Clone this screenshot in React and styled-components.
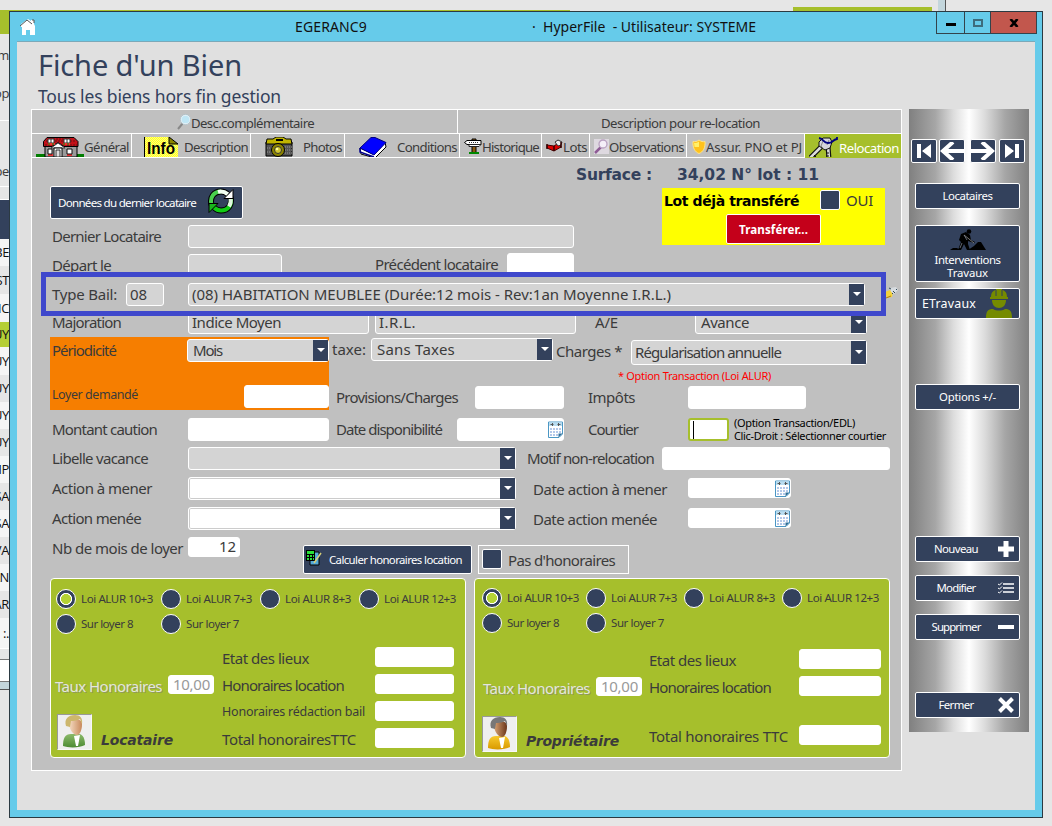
import React, { useLayoutEffect, useRef, useState } from "react";
import styled, { createGlobalStyle, css } from "styled-components";

const navy = "#33415c";
const green = "#a6bf2c";
const ink = "#3b3b3b";

const GlobalStyle = createGlobalStyle`
  * { box-sizing: border-box; }
  html, body { margin: 0; padding: 0; overflow: hidden; }
  body {
    width: 1052px;
    height: 826px;
    background: #e6e6e6;
    font-family: "Noto Sans", "DejaVu Sans", sans-serif;
    font-size: 15px;
    color: ${ink};
  }
`;

/* ---------- text ---------- */

const TextSpan = styled.span`
  display: inline-block;
  white-space: pre;
  flex: none;
`;

/* Spreads its letters so that the text covers exactly w pixels. */
function Fit({ w, children }) {
  const ref = useRef(null);
  const [spacing, setSpacing] = useState(0);
  useLayoutEffect(() => {
    const natural = ref.current.getBoundingClientRect().width;
    setSpacing((w - natural) / String(children).length);
  }, [w, children]);
  return (
    <TextSpan ref={ref} style={{ letterSpacing: spacing }}>
      {children}
    </TextSpan>
  );
}

const place = css`
  flex: none;
  margin-left: ${(p) => p.$l || 0}px;
  margin-top: ${(p) => p.$t || 0}px;
`;

const LabelBox = styled.div`
  ${place}
  width: ${(p) => (p.$w ? p.$w + "px" : "auto")};
  height: 20px;
  line-height: ${(p) => (p.$bold || p.$size ? 20 : 18)}px;
  font-size: ${(p) => p.$size || 15}px;
  font-family: ${(p) => (p.$bold ? '"DejaVu Sans", sans-serif' : "inherit")};
  font-weight: ${(p) => (p.$bold ? 700 : 400)};
  font-style: ${(p) => (p.$italic ? "italic" : "normal")};
  color: ${(p) => p.$color || "inherit"};
  text-shadow: ${(p) => p.$shadow || "none"};
  white-space: nowrap;
`;

function Label({ fit, children, ...rest }) {
  return (
    <LabelBox {...rest}>
      <Fit w={fit}>{children}</Fit>
    </LabelBox>
  );
}

/* ---------- desktop behind the window ---------- */

const Desktop = styled.div`
  position: relative;
  width: 1052px;
  height: 826px;
  overflow: hidden;
  background: #e6e6e6;
`;

const BackList = styled.div`
  width: 9px;
  overflow: hidden;
  font-family: "Open Sans", "Noto Sans", sans-serif;
  font-size: 13px;
  letter-spacing: -0.4px;
  color: #000;
`;

const BackStrip = styled.div`
  height: ${(p) => p.$h}px;
  line-height: ${(p) => p.$h}px;
  background: ${(p) => p.$bg || "transparent"};
  border-bottom: ${(p) => (p.$line ? `1px solid ${p.$line}` : "none")};
  color: ${(p) => p.$color || "#111"};
  white-space: nowrap;
  display: flex;
  justify-content: flex-end;
`;

const TopAccents = styled.div`
  position: absolute;
  left: 0;
  top: 0;
  width: 1052px;
  height: 11px;
  display: flex;
  align-items: flex-end;
`;

const Accent = styled.div`
  width: ${(p) => p.$w}px;
  height: ${(p) => p.$h}px;
  margin-left: ${(p) => p.$l || 0}px;
  background: ${(p) => p.$bg};
  border-right: ${(p) => (p.$edge ? "1px solid #555" : "none")};
`;

/* ---------- window frame ---------- */

const Window = styled.div`
  position: absolute;
  left: 9px;
  top: 11px;
  width: 1034px;
  height: 807px;
  border: 1px solid #2b3a42;
  background: #66cbea;
  padding: 0 7px 7px;
  display: flex;
  flex-direction: column;
`;

const TitleBar = styled.div`
  flex: none;
  height: 30px;
  display: flex;
  align-items: flex-start;
  color: #111;
  border-bottom: 1px solid #7ba9b9;
`;

const HomeIcon = styled.svg`
  flex: none;
  margin: 7px 0 0 3px;
  width: 16px;
  height: 16px;
`;

const TitleText = styled.div`
  flex: none;
  width: ${(p) => p.$w}px;
  margin-left: ${(p) => p.$l}px;
  font-size: 14px;
  line-height: 20px;
  margin-top: 5px;
  white-space: pre;
`;

const WindowButtons = styled.div`
  flex: none;
  display: flex;
  height: 22px;
  margin-left: 180px;
  border: 1px solid #33434b;
  border-top: 0;
`;

const WindowButton = styled.div`
  width: ${(p) => p.$w}px;
  background: ${(p) => p.$bg || "transparent"};
  border-right: ${(p) => (p.$last ? "none" : "1px solid #33434b")};
  display: flex;
  align-items: center;
  justify-content: center;
`;

const Content = styled.div`
  flex: 1;
  min-height: 0;
  background: #e0e0e0;
  display: flex;
  flex-direction: column;
`;

const Heading = styled.div`
  height: 67px;
  padding: 4px 0 0 21px;
  color: ${navy};
`;

const PageTitle = styled.h1`
  margin: 0;
  font-size: 29px;
  font-weight: 400;
  line-height: 38px;
`;

const PageSubtitle = styled.h2`
  margin: 0;
  font-size: 17.5px;
  font-weight: 400;
  line-height: 25px;
`;

const Columns = styled.div`
  display: flex;
  align-items: flex-start;
  padding-left: 14px;
`;

/* ---------- tabs ---------- */

const Sheet = styled.div`
  flex: none;
  width: 871px;
  height: 662px;
  background: #c0c0c0;
  border: 1px solid #fff;
  display: flex;
  flex-direction: column;
`;

const TabRow = styled.div`
  flex: none;
  display: flex;
  height: ${(p) => p.$h}px;
  font-size: 13.2px;
`;

const Tab = styled.div`
  flex: none;
  width: ${(p) => p.$w}px;
  border-bottom: 1px solid ${(p) => (p.$active ? green : "#fff")};
  border-right: ${(p) => (p.$last ? "none" : "1px solid #fff")};
  background: ${(p) => (p.$active ? green : "transparent")};
  color: ${(p) => (p.$active ? "#fff" : ink)};
  display: flex;
  align-items: center;
  justify-content: ${(p) => (p.$center ? "center" : "flex-end")};
  gap: ${(p) => p.$gap || 0}px;
  padding: ${(p) => (p.$active ? 4 : 2)}px ${(p) => (p.$center ? 0 : 2)}px 0 ${(p) => (p.$center ? 2 : 0)}px;
  overflow: hidden;
`;

const Glyph = styled.svg`
  flex: none;
  width: ${(p) => p.$w}px;
  height: ${(p) => p.$h}px;
  margin-left: ${(p) => p.$l || 0}px;
  margin-top: ${(p) => p.$t || 0}px;
`;

/* ---------- form ---------- */

const Form = styled.div`
  position: relative;
  flex: 1;
  padding-left: 18px;
`;

const Row = styled.div`
  display: flex;
  align-items: flex-start;
  height: ${(p) => p.$h}px;
  padding-left: ${(p) => p.$pad || 0}px;
`;

const Column = styled.div`
  ${place}
  display: flex;
  flex-direction: column;
`;

const Field = styled.div`
  ${place}
  width: ${(p) => p.$w}px;
  height: ${(p) => p.$h || 23}px;
  background: ${(p) => (p.$grey ? "#d4d4d4" : "#fff")};
  border: ${(p) => (p.$focus ? `2px solid ${green}` : "1px solid #fff")};
  border-radius: 3px;
  padding: 0 3px;
  line-height: 18px;
  display: flex;
  align-items: center;
  justify-content: ${(p) => (p.$right ? "flex-end" : "flex-start")};
  color: ${(p) => p.$color || ink};
  > span {
    margin-top: -2px;
  }
`;

const DateField = styled(Field)`
  padding: 0;
  justify-content: flex-end;
`;

const Caret = styled.div`
  width: 1px;
  height: 18px;
  background: #000;
`;

const SelectBox = styled(Field)`
  padding: 0 0 0 ${(p) => p.$pad || 3}px;
  justify-content: space-between;
  box-shadow: ${(p) => (p.$grey ? "none" : "inset 0 0 0 1px #ccc")};
`;

const SelectArrow = styled.div`
  width: 15px;
  align-self: stretch;
  background: ${navy};
  display: flex;
  align-items: center;
  justify-content: center;
  &::after {
    content: "";
    border: 4px solid transparent;
    border-top-color: #fff;
    border-bottom: 0;
    margin-bottom: 1px;
  }
`;

function Select({ children, fit, ...rest }) {
  return (
    <SelectBox {...rest}>
      {children ? <Fit w={fit}>{children}</Fit> : <span />}
      <SelectArrow />
    </SelectBox>
  );
}

const Button = styled.div`
  ${place}
  width: ${(p) => p.$w || 105}px;
  height: ${(p) => p.$h || 26}px;
  background: ${(p) => p.$bg || navy};
  color: #fff;
  border: 1px solid #fff;
  border-radius: 2px;
  font-size: ${(p) => p.$size || 11.4}px;
  font-weight: ${(p) => (p.$bold ? 700 : 400)};
  display: flex;
  flex-direction: ${(p) => (p.$stack ? "column" : "row")};
  align-items: center;
  justify-content: ${(p) => (p.$start ? "flex-start" : "center")};
  padding-left: ${(p) => p.$pad || 0}px;
  padding-bottom: ${(p) => p.$lift || 0}px;
  line-height: 13px;
  overflow: hidden;
`;

const CheckBox = styled.div`
  ${place}
  width: 20px;
  height: 20px;
  background: ${navy};
  border: 1px solid #fff;
  border-radius: 2px;
`;

const TransferCard = styled.div`
  margin-left: 86px;
  width: 223px;
  height: 57px;
  background: #ff0;
`;

const OrangeCard = styled.div`
  flex: none;
  width: 279px;
  height: 73px;
  background: #f67e00;
`;

const Outline = styled.div`
  ${place}
  width: 151px;
  height: 29px;
  border: 1px solid #fff;
  display: flex;
`;

const Hint = styled.div`
  ${place}
  font-size: 11px;
  line-height: 13px;
  color: ${(p) => p.$color || "#000"};
  display: flex;
  flex-direction: column;
  align-items: flex-start;
`;

const HighlightFrame = styled.div`
  position: absolute;
  left: 9px;
  top: 114px;
  width: 845px;
  height: 44px;
  border: 5px solid #3f48cc;
`;

/* ---------- fee cards ---------- */

const FeeCards = styled.div`
  display: flex;
  gap: 8px;
`;

const FeeCard = styled.div`
  flex: none;
  width: 416px;
  height: 180px;
  background: ${green};
  border: 1px solid #fff;
  border-radius: 4px;
`;

const RadioGrid = styled.div`
  display: grid;
  grid-template-columns: ${(p) => p.$cols};
  grid-auto-rows: 25px;
  padding: ${(p) => p.$top}px 0 0 ${(p) => p.$left}px;
`;

const RadioItem = styled.div`
  display: flex;
  align-items: flex-start;
  font-size: 11.5px;
  line-height: 20px;
  gap: 5px;
`;

const RadioDot = styled.span`
  flex: none;
  width: 20px;
  height: 20px;
  border-radius: 50%;
  border: 1px solid #fff;
  background: ${(p) =>
    p.$on
      ? `radial-gradient(circle, #b5d334 4.8px, #fff 5.2px, #fff 5.8px, ${navy} 6.4px)`
      : navy};
`;

const FeeBody = styled.div`
  display: flex;
`;

const FeeLeft = styled.div`
  flex: none;
  width: ${(p) => p.$w}px;
`;

const FeeLine = styled.div`
  display: flex;
  align-items: flex-start;
  height: ${(p) => p.$h || 27}px;
`;

const Portrait = styled.svg`
  ${place}
  width: 35px;
  height: 36px;
  background: #efefef;
  border: 1px solid #f8f8f8;
  border-top-color: #999;
  border-left-color: #999;
`;

/* ---------- side panel ---------- */

const SidePanel = styled.div`
  flex: none;
  width: 120px;
  height: 623px;
  margin-left: 7px;
  background: linear-gradient(90deg, #808080 0, #a6a6a6 22%, #dcdcdc 37%, #fff 50%, #dcdcdc 63%, #a6a6a6 80%, #808080 100%);
`;

const NavButtons = styled.div`
  display: flex;
  padding: 30px 0 0 2px;
  height: 74px;
`;

const SideButtons = styled.div`
  display: flex;
  flex-direction: column;
  padding-left: 6px;
`;

const SideText = styled.div`
  width: 80px;
  margin-right: 2px;
  padding-bottom: 1px;
  display: flex;
  justify-content: center;
`;

/* ---------- drawings ---------- */

const House = () => (
  <Glyph $w={48} $h={20} viewBox="0 0 48 20">
    <path d="M0 17h48v3H0z" fill="#007d00" />
    <path d="M9 9h32v11H9z" fill="#9a9a9a" stroke="#000" />
    <path d="M11 .5h27l4 4v5H28l-6-4-6 4H7.500v-5z" fill="#c31018" stroke="#000" />
    <path d="M10 4h30M9 8h5M31 8h10M17 2h16" stroke="#671010" strokeDasharray="2 1" />
    <path d="M12 2h6v4h-6zM28 2h6v4h-6z" fill="#fff" stroke="#333" />
    <path d="M15 2v4M31 2v4" stroke="#333" />
    <path d="M12 7h7M27 7h7M12 18h5M31 18h5" stroke="#e33" strokeWidth="2" />
    <path d="M12 7h7M27 7h7" stroke="#080" strokeDasharray="2 2" />
    <path d="M15 11l7-5 7 5z" fill="#fff" stroke="#444" />
    <path d="M18 11h8v9h-8z" fill="#fff" stroke="#000" />
    <path d="M20 13h4v7h-4z" fill="#ddd" stroke="#333" />
    <path d="M12 12h4v5h-4zM31 12h5v5h-5z" fill="#fff" stroke="#111" />
  </Glyph>
);

const Camera = () => (
  <Glyph $w={28} $h={20} viewBox="0 0 28 20">
    <path d="M1 5h26v14H1z" fill="#555" stroke="#000" />
    <path d="M18 10h9M18 13h9M18 16h9M2 11h5M2 15h5" stroke="#999" strokeDasharray="1 1" />
    <path d="M2 2h6l3-2h7l3 2h5l1 5H1z" fill="#c0b400" stroke="#000" />
    <path d="M11 3h7" stroke="#000" strokeWidth="2" />
    <circle cx="13" cy="13" r="6.500" fill="#8c8400" stroke="#000" />
    <circle cx="13" cy="13" r="3.500" fill="#d0c730" stroke="#333" />
    <circle cx="12" cy="12" r="1.300" fill="#ff9" />
  </Glyph>
);

const Book = () => (
  <Glyph $w={28} $h={20} viewBox="0 0 28 20">
    <path d="M1 11l13 6L26 5l1 5-11 11L2 17z" fill="#fff" stroke="#000" />
    <path d="M1 11L12 .500h4L27 5.500 15 18z" fill="#00f" stroke="#000080" />
    <path d="M1 11v4l14 5" fill="none" stroke="#00008b" strokeWidth="1.500" />
  </Glyph>
);

const Sign = () => (
  <Glyph $w={18} $h={17} viewBox="0 0 18 17">
    <path d="M8 1h4v14H8z" fill="#8b5a10" stroke="#000" />
    <path d="M3 2.500h14v4H3L.500 4.500z" fill="#fff" stroke="#000" />
    <path d="M5 8.500h10l2-2H5z" fill="#fff" stroke="#222" />
    <path d="M5 4.500h9" stroke="#333" strokeDasharray="1 1" />
    <path d="M5 15h10" stroke="#080" strokeWidth="2" />
  </Glyph>
);

const Bed = () => (
  <Glyph $w={17} $h={13} $t={-2} viewBox="0 0 17 13">
    <path d="M1 6l7 1 6-4 1 5-7 4-7-3z" fill="#d00" stroke="#400" />
    <path d="M9 3l3-2 4 2-1 3-3 1z" fill="#eee" stroke="#333" />
    <path d="M1 5v5M8 7v5M15 3v6" stroke="#300" strokeWidth="1.500" />
  </Glyph>
);

const Lens = () => (
  <Glyph $w={15} $h={15} viewBox="0 0 15 15">
    <path d="M0 0h15v15H0z" fill="#ded9e0" />
    <path d="M1 14l6-6" stroke="#8f5d96" strokeWidth="2.500" />
    <circle cx="9" cy="5" r="4" fill="#f5eff8" stroke="#b9a1c0" strokeWidth="1.300" />
  </Glyph>
);

const SearchIcon = () => (
  <Glyph $w={14} $h={16} $t={-1} viewBox="0 0 14 16">
    <path d="M1 15l5-6" stroke="#888" strokeWidth="2" />
    <circle cx="8.500" cy="5.500" r="4.600" fill="#bfe6f5" stroke="#e8f3f8" strokeWidth="1.500" />
    <circle cx="8.500" cy="5.500" r="5.100" fill="none" stroke="#9cb0ba" strokeWidth=".6" />
  </Glyph>
);

const Shield = () => (
  <Glyph $w={14} $h={15} viewBox="0 0 14 15">
    <path d="M7 1c2 1.500 4 2 6 1.500C13.500 9 11 13 7 14.500 3 13 .500 9 1 2.500 3 3 5 2.500 7 1z" fill="#ffc21c" stroke="#ffe58a" />
    <path d="M2 4c2 0 3.500-.5 5-1.500V8H2.500z" fill="#fff06a" />
  </Glyph>
);

const Keys = () => (
  <Glyph $w={29} $h={22} viewBox="0 0 29 22">
    <path d="M12 10L1 21M19 9l1 13" stroke="#111" strokeWidth="5" />
    <path d="M12 10L1 21M19 9l1 13" stroke="#ddd" strokeWidth="2.600" />
    <path d="M5 18l2 2M3 20l2 2M17 16h3M17 19h3" stroke="#111" />
    <path d="M10 5l4-4h7l2 4-2 6-5 2-6-4z" fill="#d5d5dc" stroke="#111" />
    <path d="M14 4l-2 5 3 3M20 3l-2 5" stroke="#888" fill="none" />
    <path d="M10 1c5 1 4 5 9 5s4-3 9-4V0" fill="none" stroke="#00007e" strokeWidth="1.800" />
  </Glyph>
);

const InfoNote = () => (
  <Glyph $w={34} $h={20} viewBox="0 0 34 20">
    <defs>
      <pattern id="dots" width="2" height="2" patternUnits="userSpaceOnUse">
        <path d="M0 0h2v2H0z" fill="#ff2" />
        <path d="M0 0h1v1H0zM1 1h1v1H1z" fill="#ffff78" />
      </pattern>
    </defs>
    <path d="M0 0h25l9 8v12H0z" fill="url(#dots)" />
    <path d="M.500 0v20" stroke="#000" />
    <path d="M25 0l9 7h-9z" fill="#8a8500" stroke="#000" />
    <text x="3" y="16.500" fontSize="17" fontWeight="700" fontFamily="Liberation Sans, sans-serif" fill="#000" textLength="28" lengthAdjust="spacingAndGlyphs">Info</text>
  </Glyph>
);

const Recycle = () => (
  <Glyph $w={26} $h={26} $l={12} $t={-3} viewBox="0 0 26 26">
    <path d="M3.500 17C1.500 9 6 3.500 13 3.500c3 0 5 1 7 3" fill="none" stroke="#000" strokeWidth="6" />
    <path d="M22.500 9c2 8-2.500 13.500-9.500 13.500-3 0-5-1-7-3" fill="none" stroke="#000" strokeWidth="6" />
    <path d="M3.500 17C1.500 9 6 3.500 13 3.500" fill="none" stroke="#49cf4d" strokeWidth="4" />
    <path d="M10 3.900c4-1 7 0 10 2.500" fill="none" stroke="#f2fff2" strokeWidth="4" />
    <path d="M22.500 9c2 8-2.500 13.500-9.500 13.500-3 0-5-1-7-3" fill="none" stroke="#12cc15" strokeWidth="4" />
    <path d="M22.500 10c1 4 0 6-1.500 8.500" fill="none" stroke="#dff6df" strokeWidth="4" />
    <path d="M25 1.500v9h-9z" fill="#fff" stroke="#000" />
    <path d="M1 24.500v-9h9z" fill="#19b51c" stroke="#000" />
  </Glyph>
);

const Calendar = () => (
  <Glyph $w={15} $h={17} viewBox="0 0 15 17">
    <path d="M.500 1h14v12l-3.500 3.500H.500z" fill="#fff" stroke="#4b97c4" />
    <path d="M1 1.500h13v3.500H1z" fill="#b9ddf1" />
    <path d="M2.500 3.500h3M9.500 3.500h3M4.500 2v3M10.500 2v3" stroke="#555" />
    <path d="M2 8h11M2 11h11M2 14h8" stroke="#b3c8ea" strokeWidth="2" strokeDasharray="2 1" />
    <path d="M14.500 12.500h-4v4z" fill="#2f6f98" />
  </Glyph>
);

const Calculator = () => (
  <Glyph $w={16} $h={16} $l={2} $t={-4} viewBox="0 0 16 16">
    <path d="M4 2h9v13H4z" fill="#54a9d8" stroke="#000" />
    <path d="M0 0h9v11H0z" fill="#000" />
    <path d="M1 1h7v3H1zM1 5h2v2H1zM4 5h2v2H4zM7 5h1v2H7zM1 8h2v2H1zM4 8h2v2H4zM7 8h1v2H7z" fill="#29df38" />
    <path d="M15 3l-7 10" stroke="#d8cf76" strokeWidth="1.500" />
  </Glyph>
);

const Digger = () => (
  <Glyph $w={36} $h={22} viewBox="0 0 36 22">
    <circle cx="19" cy="2.500" r="2.300" fill="#000" />
    <path d="M11 5l5-2 4 3 1 5 4 2-1 1-6-2v3l2 6h-3l-3-6-3 6H8l3-8-2-2z" fill="#000" />
    <path d="M14 6l10 8" stroke="#aaa" strokeWidth=".7" />
    <path d="M14 6l3 5M12 14l-2 5" stroke="#8b93a2" strokeWidth=".7" />
    <path d="M0 21l3-2h4l3 2h8l6-4 4-4h3l5 8z" fill="#000" />
  </Glyph>
);

const Worker = () => (
  <Glyph $w={26} $h={29} $l={10} viewBox="0 0 26 29">
    <path d="M5 8C5 3 8 1 10 1V0h6v1c2 0 5 2 5 7h1v2H4V8z" fill="#758b00" />
    <path d="M10 1v6M16 1v6" stroke={navy} />
    <path d="M6 11h14c0 5-3 8-7 8s-7-3-7-8z" fill="#758b00" />
    <path d="M0 29c0-7 2-9 7-9 3 2 9 2 12 0 5 0 7 2 7 9z" fill="#758b00" />
  </Glyph>
);

const PlusIcon = () => (
  <Glyph $w={16} $h={16} viewBox="0 0 16 16">
    <path d="M8 0v16M0 8h16" stroke="#fff" strokeWidth="5" />
  </Glyph>
);

const ListIcon = () => (
  <Glyph $w={16} $h={12} viewBox="0 0 16 12">
    <path d="M5 2h11M5 6h11M5 10h11" stroke="#fff" strokeWidth="1.700" />
    <path d="M0 2l1.500 1L4 .500M0 6l1.500 1L4 4.500M0 10l1.500 1L4 8.500" stroke="#fff" fill="none" />
  </Glyph>
);

const MinusIcon = () => (
  <Glyph $w={16} $h={4} viewBox="0 0 16 4">
    <path d="M0 0h16v4H0z" fill="#fff" />
  </Glyph>
);

const CrossIcon = () => (
  <Glyph $w={16} $h={16} viewBox="0 0 16 16">
    <path d="M1.500 1.500l13 13M14.500 1.500l-13 13" stroke="#fff" strokeWidth="4" />
  </Glyph>
);

const FirstIcon = () => (
  <Glyph $w={14} $h={14} viewBox="0 0 14 14">
    <path d="M0 0h4v14H0zM14 0v14L5 7z" fill="#fff" />
  </Glyph>
);

const LastIcon = () => (
  <Glyph $w={14} $h={14} viewBox="0 0 14 14">
    <path d="M10 0h4v14h-4zM0 0v14l9-7z" fill="#fff" />
  </Glyph>
);

const BackIcon = () => (
  <Glyph $w={24} $h={18} viewBox="0 0 24 18">
    <path d="M24 9H4M13 0L3 9l10 9" stroke="#fff" strokeWidth="4" fill="none" />
  </Glyph>
);

const ForwardIcon = () => (
  <Glyph $w={24} $h={18} viewBox="0 0 24 18">
    <path d="M0 9h20M11 0l10 9-10 9" stroke="#fff" strokeWidth="4" fill="none" />
  </Glyph>
);

const Sparkle = () => (
  <Glyph $w={13} $h={13} $l={20} $t={5} viewBox="0 0 13 13">
    <path d="M0 5l5-2 3 2-1 5-5 1z" fill="#f3d13c" />
    <path d="M5 1l6-1 2 3-4 4-3-2z" fill="#d7dce0" />
    <path d="M4 1l2 1M11 2l1 1M8 4l2 2M7 6l1 1" stroke="#32495a" />
    <path d="M1 11l5-2" stroke="#b07b12" />
  </Glyph>
);

function Person({ hair, skin, coat, id, ...rest }) {
  return (
    <Portrait viewBox="0 0 33 34" {...rest}>
      <defs>
        <linearGradient id={id + "s"}>
          <stop offset="0" stopColor={skin[0]} />
          <stop offset="1" stopColor={skin[1]} />
        </linearGradient>
        <linearGradient id={id + "c"} x1="0" y1="0" x2="0" y2="1">
          <stop offset="0" stopColor={coat[0]} />
          <stop offset="1" stopColor={coat[1]} />
        </linearGradient>
      </defs>
      <path d="M5 31c0-8 2-12 8-12h8c4 0 6 5 6 11-5 3-17 3-22 1z" fill={`url(#${id}c)`} />
      <path d="M16 21l2 10h2l2-11z" fill="#fff" />
      <path d="M11 8c0-5 13-6 13 1 0 6-2 11-5 11-4 0-8-6-8-12z" fill={`url(#${id}s)`} />
      <path d="M8 11C6 4 10 0 17 0c5 0 8 3 7 9l-2-5c-4 2-7 2-9 2l-1 6z" fill={hair} />
    </Portrait>
  );
}

/* ---------- composed parts ---------- */

const ALUR = [
  ["Loi ALUR 10+3", 72],
  ["Loi ALUR 7+3", 66],
  ["Loi ALUR 8+3", 66],
  ["Loi ALUR 12+3", 72],
  ["Sur loyer 8", 52],
  ["Sur loyer 7", 53],
];

function Radios({ cols, top, left }) {
  return (
    <RadioGrid $cols={cols} $top={top} $left={left}>
      {ALUR.map(([text, w], i) => (
        <RadioItem key={text}>
          <RadioDot $on={i === 0} />
          <Fit w={w}>{text}</Fit>
        </RadioItem>
      ))}
    </RadioGrid>
  );
}

const rateShadow = "1px 1px 0 #8f9a5a";

function SideAction({ text, fit, icon, t }) {
  return (
    <Button $t={t} $start>
      <SideText>
        <Fit w={fit}>{text}</Fit>
      </SideText>
      {icon}
    </Button>
  );
}

const LIST = [
  ["BE", 27], ["ST", 28], ["NC", 28], ["UY", 25], ["UY", 28], ["UY", 27], ["UY", 27],
  ["UY", 27], ["MP", 27], ["SA", 27], ["SA", 27], ["VA", 27], ["AN", 27], ["AR", 27],
];

export default function App() {
  return (
    <Desktop>
      <GlobalStyle />
      <BackList>
        <BackStrip $h={10} />
        <BackStrip $h={24} $bg={green} />
        <BackStrip $h={42} $color={ink}>m</BackStrip>
        <BackStrip $h={34} $color={ink}>op</BackStrip>
        <BackStrip $h={11} $line="#fff" />
        <BackStrip $h={34} />
        <BackStrip $h={32} $line="#fff" $color={ink}>pe</BackStrip>
        <BackStrip $h={13} $line="#fff" />
        <BackStrip $h={39} $bg={navy} />
        {LIST.map(([text, h], i) => (
          <BackStrip key={i} $h={h} $bg={i === 3 ? "#b5cf36" : i % 2 ? "#e6e6e6" : "#f5f5f5"}>
            {text}
          </BackStrip>
        ))}
        <BackStrip $h={31} $bg="#f5f5f5" $line="#fff">:.</BackStrip>
        <BackStrip $h={11} $line="#777" />
        <BackStrip $h={22} $bg="#fff" $line="#777" />
        <BackStrip $h={8} $bg="#c3d6dc" $line="#555" />
      </BackList>
      <TopAccents>
        <Accent $w={570} $h={1} $bg={green} />
        <Accent $w={139} $h={4} $l={223} $bg={green} />
        <Accent $w={8} $h={11} $l={6} $bg="#c3d6dc" $edge />
      </TopAccents>

      <Window>
        <TitleBar>
          <HomeIcon viewBox="0 0 16 16">
            <path d="M1 8V5l7-5 3 2V1h3v4l1 2v9h-5v-5H6v5H2V8z" fill="#fff" />
            <path d="M0 7l7-6 5 4M12 1h2v3" fill="none" stroke="#555" strokeWidth="1" />
          </HomeIcon>
          <TitleText $l={259} $w={237}><Fit w={72}>EGERANC9</Fit></TitleText>
          <TitleText $l={0} $w={11}>·</TitleText>
          <TitleText $l={0} $w={213}><Fit w={213}>HyperFile  - Utilisateur: SYSTEME</Fit></TitleText>
          <WindowButtons>
            <WindowButton $w={28}>
              <Glyph $w={10} $h={3} $t={3} viewBox="0 0 10 3"><path d="M0 0h10v3H0z" /></Glyph>
            </WindowButton>
            <WindowButton $w={26}>
              <Glyph $w={10} $h={8} viewBox="0 0 10 8">
                <path d="M1 1h8v6H1z" fill="none" stroke="#3d6c7c" strokeWidth="2" />
              </Glyph>
            </WindowButton>
            <WindowButton $w={45} $bg="#c2574d" $last>
              <Glyph $w={10} $h={8} viewBox="0 0 10 8">
                <path d="M1.500 0l7 8M8.500 0l-7 8" stroke="#000" strokeWidth="2.600" />
              </Glyph>
            </WindowButton>
          </WindowButtons>
        </TitleBar>

        <Content>
          <Heading>
            <PageTitle><Fit w={204}>Fiche d'un Bien</Fit></PageTitle>
            <PageSubtitle><Fit w={243}>Tous les biens hors fin gestion</Fit></PageSubtitle>
          </Heading>

          <Columns>
            <Sheet>
              <TabRow $h={24}>
                <Tab $w={426} $center><SearchIcon /><Fit w={123}>Desc.complémentaire</Fit></Tab>
                <Tab $w={443} $center $last><Fit w={159}>Description pour re-location</Fit></Tab>
              </TabRow>
              <TabRow $h={24}>
                <Tab $w={100}><House /><Fit w={45}>Général</Fit></Tab>
                <Tab $w={119} $gap={6}><InfoNote /><Fit w={64}>Description</Fit></Tab>
                <Tab $w={94} $gap={10}><Camera /><Fit w={39}>Photos</Fit></Tab>
                <Tab $w={115} $gap={10}><Book /><Fit w={60}>Conditions</Fit></Tab>
                <Tab $w={82}><Sign /><Fit w={57}>Historique</Fit></Tab>
                <Tab $w={48}><Bed /><Fit w={24}>Lots</Fit></Tab>
                <Tab $w={97}><Lens /><Fit w={75}>Observations</Fit></Tab>
                <Tab $w={118}><Shield /><Fit w={96}>Assur. PNO et PJ</Fit></Tab>
                <Tab $w={96} $active $last $gap={1}><Keys /><Fit w={60}>Relocation</Fit></Tab>
              </TabRow>

              <Form>
                <Row $h={66}>
                  <Button $w={193} $h={33} $t={28} $start $pad={7} $size={11.6}>
                    <Fit w={138}>Données du dernier locataire</Fit>
                    <Recycle />
                  </Button>
                  <Column $l={333}>
                    <Row $h={30}>
                      <Label $bold $size={15.5} $color={navy} $w={101} $t={7} fit={76}>Surface :</Label>
                      <Label $bold $size={15.5} $color={navy} $t={7} fit={142}>34,02 N° lot : 11</Label>
                    </Row>
                    <TransferCard>
                      <Row $h={26} $pad={2}>
                        <Label $bold $size={14} $color="#000" $w={156} $t={3} fit={135}>Lot déjà transféré</Label>
                        <CheckBox $t={2} />
                        <Label $l={6} $t={3} fit={27}>OUI</Label>
                      </Row>
                      <Button $l={64} $w={95} $h={30} $bg="#c4001a" $bold $size={11.6}>
                        <Fit w={69}>Transférer...</Fit>
                      </Button>
                    </TransferCard>
                  </Column>
                </Row>

                <Row $h={28} $pad={2}>
                  <Label $w={136} $t={3} fit={109}>Dernier Locataire</Label>
                  <Field $grey $w={386} $t={1} />
                </Row>

                <Row $h={30} $pad={2}>
                  <Label $w={136} $t={4} fit={59}>Départ le</Label>
                  <Field $grey $w={94} $t={2} />
                  <Label $l={93} $w={132} $t={3} fit={123}>Précédent locataire</Label>
                  <Field $w={67} $t={1} />
                </Row>

                <Row $h={28} $pad={2}>
                  <Label $w={74} $t={3} fit={65}>Type Bail:</Label>
                  <Field $grey $w={38} $t={1}><Fit w={17}>08</Fit></Field>
                  <Select $grey $l={24} $w={677} $t={1} fit={479}>(08) HABITATION MEUBLEE (Durée:12 mois - Rev:1an Moyenne I.R.L.)</Select>
                  <Sparkle />
                </Row>

                <Row $h={27} $pad={2}>
                  <Label $w={136} $t={3} fit={69}>Majoration</Label>
                  <Field $grey $w={181} $t={1}><Fit w={89}>Indice Moyen</Fit></Field>
                  <Field $grey $l={6} $w={201} $t={1}><Fit w={37}>I.R.L.</Fit></Field>
                  <Label $l={19} $w={100} $t={3} fit={23}>A/E</Label>
                  <Select $grey $w={172} $t={1} $pad={5} fit={48}>Avance</Select>
                </Row>

                <Row $h={73}>
                  <OrangeCard>
                    <Row $h={47} $pad={2}>
                      <Label $w={135} $t={4} fit={64}>Périodicité</Label>
                      <Select $grey $w={142} $t={2} $pad={5} fit={29}>Mois</Select>
                    </Row>
                    <Row $h={26} $pad={2}>
                      <Label $w={192} $t={1} $size={12.5} fit={86}>Loyer demandé</Label>
                      <Field $w={85} $t={1} />
                    </Row>
                  </OrangeCard>
                  <Column>
                    <Row $h={32} $pad={3}>
                      <Label $w={39} $t={3} fit={34}>taxe:</Label>
                      <Select $grey $w={182} $t={1} $pad={5} fit={78}>Sans Taxes</Select>
                      <Label $l={3} $w={75} $t={5} fit={66}>Charges *</Label>
                      <Select $grey $w={236} $h={25} $t={3} fit={146}>Régularisation annuelle</Select>
                    </Row>
                    <Row $h={16} $pad={289}>
                      <Hint $color="#f00"><Fit w={153}>* Option Transaction (Loi ALUR)</Fit></Hint>
                    </Row>
                    <Row $h={25} $pad={7}>
                      <Label $w={139} $t={3} fit={122}>Provisions/Charges</Label>
                      <Field $w={89} $t={1} />
                      <Label $l={24} $w={100} $t={3} fit={47}>Impôts</Label>
                      <Field $w={118} $t={1} />
                    </Row>
                  </Column>
                </Row>

                <Row $h={34} $pad={2}>
                  <Label $w={136} $t={10} fit={105}>Montant caution</Label>
                  <Field $w={141} $t={8} />
                  <Label $l={7} $w={121} $t={10} fit={106}>Date disponibilité</Label>
                  <DateField $w={107} $t={8}><Calendar /></DateField>
                  <Label $l={24} $w={100} $t={10} fit={50}>Courtier</Label>
                  <Field $focus $w={41} $t={8}><Caret /></Field>
                  <Hint $l={5} $t={6}>
                    <Fit w={121}>(Option Transaction/EDL)</Fit>
                    <Fit w={152}>Clic-Droit : Sélectionner courtier</Fit>
                  </Hint>
                </Row>

                <Row $h={30} $pad={2}>
                  <Label $w={136} $t={5} fit={96}>Libelle vacance</Label>
                  <Select $grey $w={328} $t={3} />
                  <Label $l={11} $w={135} $t={5} fit={127}>Motif non-relocation</Label>
                  <Field $w={228} $t={3} />
                </Row>

                <Row $h={30} $pad={2}>
                  <Label $w={136} $t={5} fit={100}>Action à mener</Label>
                  <Select $w={328} $t={3} />
                  <Label $l={17} $w={155} $t={6} fit={134}>Date action à mener</Label>
                  <DateField $w={103} $h={20} $t={4}><Calendar /></DateField>
                </Row>

                <Row $h={30} $pad={2}>
                  <Label $w={136} $t={5} fit={89}>Action menée</Label>
                  <Select $w={328} $t={3} />
                  <Label $l={17} $w={155} $t={6} fit={124}>Date action menée</Label>
                  <DateField $w={103} $h={20} $t={4}><Calendar /></DateField>
                </Row>

                <Row $h={44} $pad={2}>
                  <Label $w={136} $t={5} fit={131}>Nb de mois de loyer</Label>
                  <Field $w={52} $h={20} $t={3} $right><Fit w={17}>12</Fit></Field>
                  <Button $l={63} $t={11} $w={169} $h={29} $start $size={11.4}>
                    <Calculator />
                    <Column $l={7}><Fit w={133}>Calculer honoraires location</Fit></Column>
                  </Button>
                  <Outline $l={6} $t={11}>
                    <CheckBox $l={3} $t={3} />
                    <Label $l={6} $t={5} fit={107}>Pas d'honoraires</Label>
                  </Outline>
                </Row>

                <FeeCards>
                  <FeeCard>
                    <Radios cols="105px 99px 99px 1fr" top={10} left={5} />
                    <FeeBody>
                      <FeeLeft $w={171}>
                        <Row $h={75} $pad={4}>
                          <Label $w={113} $t={38} $color="#e4e6dc" $shadow={rateShadow} fit={107}>Taux Honoraires</Label>
                          <Field $w={46} $h={19} $t={36} $color="#999" $right><Fit w={37}>10,00</Fit></Field>
                        </Row>
                        <Row $h={40} $pad={6}>
                          <Person id="tenant" hair="#cdb76d" skin={["#f5dcc4", "#c8885a"]} coat={["#8cba6a", "#4d8b33"]} />
                          <Label $l={9} $t={16} $size={14} $bold $italic fit={72}>Locataire</Label>
                        </Row>
                      </FeeLeft>
                      <Column $t={8}>
                        <FeeLine><Label $w={153} $t={2} fit={87}>Etat des lieux</Label><Field $w={79} $h={20} /></FeeLine>
                        <FeeLine><Label $w={153} $t={2} fit={122}>Honoraires location</Label><Field $w={79} $h={20} /></FeeLine>
                        <FeeLine><Label $w={153} $t={1} $size={12.5} fit={143}>Honoraires rédaction bail</Label><Field $w={79} $h={20} /></FeeLine>
                        <FeeLine><Label $w={153} $t={2} fit={134}>Total honorairesTTC</Label><Field $w={79} $h={20} /></FeeLine>
                      </Column>
                    </FeeBody>
                  </FeeCard>

                  <FeeCard>
                    <Radios cols="104px 98px 98px 1fr" top={9} left={7} />
                    <FeeBody>
                      <FeeLeft $w={174}>
                        <Row $h={78} $pad={8}>
                          <Label $w={113} $t={41} $color="#e4e6dc" $shadow={rateShadow} fit={107}>Taux Honoraires</Label>
                          <Field $w={46} $h={19} $t={39} $color="#999" $right><Fit w={37}>10,00</Fit></Field>
                        </Row>
                        <Row $h={40} $pad={7}>
                          <Person id="owner" hair="#777" skin={["#d7a374", "#6b351a"]} coat={["#f7c92d", "#d99a00"]} />
                          <Label $l={9} $t={15} $size={14} $bold $italic fit={93}>Propriétaire</Label>
                        </Row>
                      </FeeLeft>
                      <Column $t={11}>
                        <FeeLine><Label $w={150} $t={2} fit={87}>Etat des lieux</Label><Field $w={82} $h={20} /></FeeLine>
                        <FeeLine $h={49}><Label $w={150} $t={2} fit={122}>Honoraires location</Label><Field $w={82} $h={20} /></FeeLine>
                        <FeeLine><Label $w={150} $t={2} fit={139}>Total honoraires TTC</Label><Field $w={82} $h={20} /></FeeLine>
                      </Column>
                    </FeeBody>
                  </FeeCard>
                </FeeCards>

                <HighlightFrame />
              </Form>
            </Sheet>

            <SidePanel>
              <NavButtons>
                <Button $w={26} $h={24}><FirstIcon /></Button>
                <Button $w={26} $h={24} $l={2}><BackIcon /></Button>
                <Button $w={26} $h={24} $l={5}><ForwardIcon /></Button>
                <Button $w={26} $h={24} $l={3}><LastIcon /></Button>
              </NavButtons>
              <SideButtons>
                <Button $lift={2}><Fit w={50}>Locataires</Fit></Button>
                <Button $t={16} $h={57} $stack>
                  <Digger />
                  <Column $t={2}><Fit w={66}>Interventions</Fit></Column>
                  <Fit w={41}>Travaux</Fit>
                </Button>
                <Button $t={6} $h={31} $start $pad={6} $size={12.4}>
                  <Fit w={54}>ETravaux</Fit>
                  <Worker />
                </Button>
                <Button $t={65} $lift={2}><Fit w={57}>Options +/-</Fit></Button>
                <SideAction t={126} text="Nouveau" fit={44} icon={<PlusIcon />} />
                <SideAction t={13} text="Modifier" fit={39} icon={<ListIcon />} />
                <SideAction t={13} text="Supprimer" fit={49} icon={<MinusIcon />} />
                <SideAction t={52} text="Fermer" fit={35} icon={<CrossIcon />} />
              </SideButtons>
            </SidePanel>
          </Columns>
        </Content>
      </Window>
    </Desktop>
  );
}
